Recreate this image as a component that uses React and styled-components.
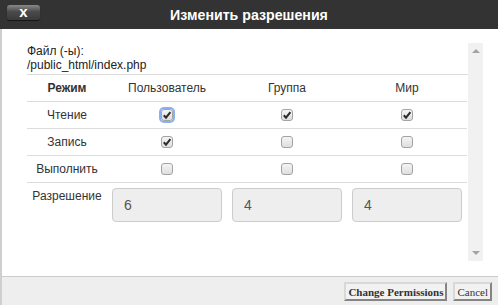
import styled, { createGlobalStyle } from "styled-components";

const GlobalStyle = createGlobalStyle`
  html, body {
    margin: 0;
    padding: 0;
    background: #fff;
  }
  body {
    font-family: "Liberation Sans", Arial, sans-serif;
  }
`;

const modes = [
  { label: "Чтение", values: [true, true, true], focus: true },
  { label: "Запись", values: [true, false, false] },
  { label: "Выполнить", values: [false, false, false] },
];

const octal = ["6", "4", "4"];

const App = () => {
  return (
    <Dialog>
      <GlobalStyle />
      <TitleBar>
        <CloseButton>x</CloseButton>
        <Title>Изменить разрешения</Title>
      </TitleBar>
      <Body>
        <ScrollArea>
          <Content>
            <FileInfo>
              Файл (-ы):
              <br />
              /public_html/index.php
            </FileInfo>
            <Table>
              <HeadCell $bold>Режим</HeadCell>
              <HeadCell>Пользователь</HeadCell>
              <HeadCell>Группа</HeadCell>
              <HeadCell>Мир</HeadCell>
              {modes.map((row) => (
                <Row key={row.label}>
                  <Cell>{row.label}</Cell>
                  {row.values.map((checked, i) => (
                    <Cell key={i}>
                      <Checkbox $focus={row.focus && i === 0}>
                        {checked && (
                          <svg width="10" height="10" viewBox="0 0 10 10">
                            <path
                              d="M1.8 5.2 L4 7.6 L8.4 2.2"
                              fill="none"
                              stroke="#2b2b2b"
                              strokeWidth="2"
                            />
                          </svg>
                        )}
                      </Checkbox>
                    </Cell>
                  ))}
                </Row>
              ))}
              <PermLabel>Разрешение</PermLabel>
              {octal.map((v, i) => (
                <InputCell key={i}>
                  <OctalInput>{v}</OctalInput>
                </InputCell>
              ))}
            </Table>
          </Content>
          <Scrollbar>
            <Arrow $up />
            <Arrow />
          </Scrollbar>
        </ScrollArea>
      </Body>
      <Footer>
        <Button $bold>Change Permissions</Button>
        <Button>Cancel</Button>
      </Footer>
    </Dialog>
  );
};

const Dialog = styled.div`
  display: flex;
  flex-direction: column;
  width: 498px;
  height: 305px;
  overflow: hidden;
`;

const TitleBar = styled.div`
  display: flex;
  align-items: center;
  height: 29px;
  background: #333;
  padding-left: 7px;
  box-sizing: border-box;
`;

const CloseButton = styled.div`
  display: flex;
  align-items: center;
  justify-content: center;
  width: 33px;
  height: 15px;
  margin-top: -4px;
  border-radius: 3px;
  background: linear-gradient(#8a8a8a, #4a4a4a 45%, #3a3a3a);
  box-shadow: 0 1px 1px rgba(0, 0, 0, 0.6);
  color: #fff;
  font-weight: bold;
  font-size: 15px;
  line-height: 1;
  padding-bottom: 2px;
  box-sizing: border-box;
`;

const Title = styled.div`
  flex: 1;
  text-align: center;
  margin-right: 40px;
  color: #fff;
  font-weight: bold;
  font-size: 14.2px;
`;

const Body = styled.div`
  flex: 1;
  border-left: 2px solid #cfcfcf;
  padding: 14px 15px 15px 25px;
  box-sizing: border-box;
`;

const ScrollArea = styled.div`
  display: flex;
  height: 218px;
`;

const Content = styled.div`
  width: 441px;
  color: #333;
  font-size: 12px;
`;

const FileInfo = styled.div`
  line-height: 14px;
  padding-top: 1px;
  margin-bottom: 2px;
  color: #222;
`;

const Table = styled.div`
  display: grid;
  grid-template-columns: 80px repeat(3, 120px);
  border-top: 1px solid #ddd;
`;

const HeadCell = styled.div`
  display: flex;
  align-items: center;
  justify-content: center;
  height: 26px;
  border-bottom: 1px solid #ddd;
  font-weight: ${(p) => (p.$bold ? "bold" : "normal")};
`;

const Row = styled.div`
  display: contents;
`;

const Cell = styled.div`
  display: flex;
  align-items: center;
  justify-content: center;
  height: 26px;
  border-bottom: 1px solid #ddd;
`;

const Checkbox = styled.span`
  display: flex;
  align-items: center;
  justify-content: center;
  width: 12px;
  height: 12px;
  box-sizing: border-box;
  border: 1px solid #a3a3a3;
  border-radius: 3px;
  background: linear-gradient(#f4f4f4, #dedede);
  box-shadow: ${(p) => (p.$focus ? "0 0 0 2px #8ab0f2" : "none")};
`;

const PermLabel = styled.div`
  text-align: center;
  padding-top: 6px;
`;

const InputCell = styled.div`
  padding: 5px 0 0 5px;
`;

const OctalInput = styled.div`
  display: flex;
  align-items: center;
  width: 110px;
  height: 34px;
  box-sizing: border-box;
  padding-left: 11px;
  border: 1px solid #ccc;
  border-radius: 4px;
  background: #eee;
  color: #555;
  font-size: 14px;
`;

const Scrollbar = styled.div`
  display: flex;
  flex-direction: column;
  justify-content: space-between;
  align-items: center;
  width: 15px;
  background: #f1f1f1;
  padding: 6px 0;
  box-sizing: border-box;
`;

const Arrow = styled.span`
  width: 0;
  height: 0;
  border-left: 4px solid transparent;
  border-right: 4px solid transparent;
  ${(p) =>
    p.$up
      ? "border-bottom: 4px solid #a3a3a3;"
      : "border-top: 4px solid #a3a3a3;"}
`;

const Footer = styled.div`
  display: flex;
  justify-content: flex-end;
  align-items: center;
  gap: 6px;
  height: 29px;
  box-sizing: border-box;
  padding: 1px 6px 0 0;
  border-top: 1px solid #ccc;
  border-left: 2px solid #cfcfcf;
  background: #eee;
`;

const Button = styled.button`
  height: 19px;
  padding: 0 2px;
  border: 2px outset #d8d8d8;
  background: #f2f2f2;
  color: #333;
  font-family: "Liberation Serif", "Times New Roman", serif;
  font-size: 11px;
  font-weight: ${(p) => (p.$bold ? "bold" : "normal")};
`;

export default App;
